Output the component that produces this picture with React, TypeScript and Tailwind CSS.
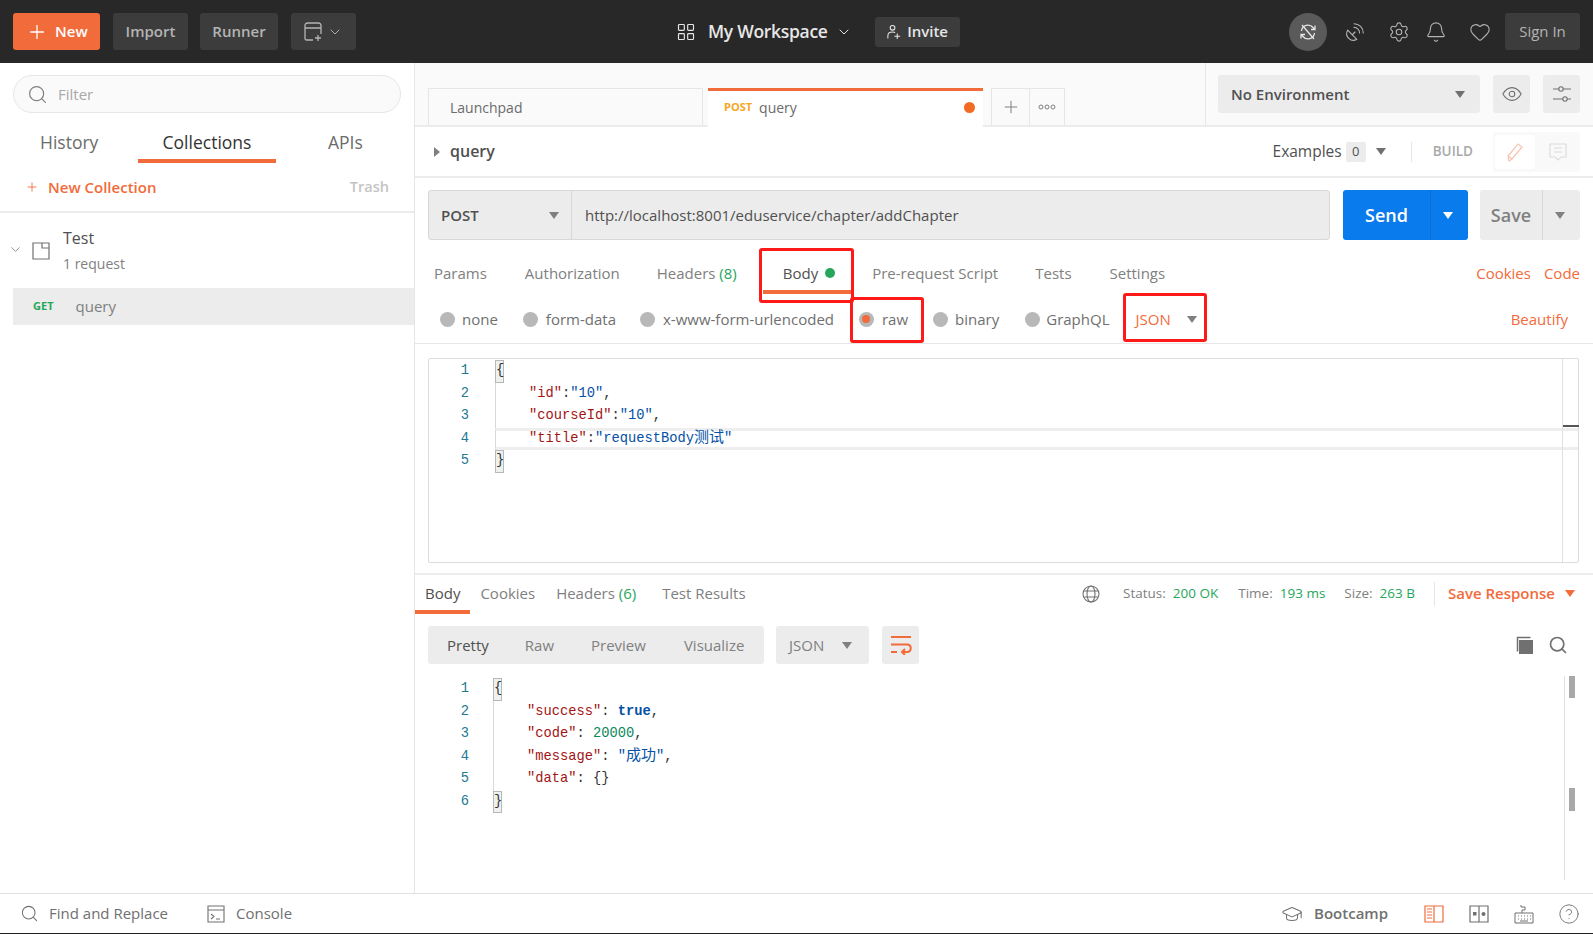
import {
  Bell,
  ChevronDown,
  CircleHelp,
  GraduationCap,
  Heart,
  LayoutGrid,
  Plus,
  SatelliteDish,
  Search,
  Settings,
} from "lucide-react";

const ORANGE = "text-[#f26b3a]";

function Caret({ className = "text-[#808080]" }: { className?: string }) {
  return (
    <svg viewBox="0 0 10 7" className={`h-[7px] w-[10px] shrink-0 ${className}`}>
      <path d="M0 0h10L5 7z" fill="currentColor" />
    </svg>
  );
}

function Radio({ on = false }: { on?: boolean }) {
  return (
    <span className="flex h-[15px] w-[15px] shrink-0 items-center justify-center rounded-full bg-[#b8b8b8]">
      {on && <span className="h-[8px] w-[8px] rounded-full bg-[#f26b3a]" />}
    </span>
  );
}

function HeaderButton({ label, width }: { label: string; width: string }) {
  return (
    <button className={`flex h-[37px] items-center justify-center rounded-[3px] bg-[#3c3c3c] text-[15px] font-semibold text-[#b4b4b4] ${width}`}>
      {label}
    </button>
  );
}

function TopBar() {
  return (
    <header className="flex h-[63px] shrink-0 items-center bg-[#282828] pl-[13px] pr-[13px]">
      <button className="flex h-[37px] w-[87px] items-center rounded-[3px] bg-[#f26b3a] pl-[13px] text-[15px] font-semibold text-white">
        <Plus size={22} strokeWidth={1.4} className="mr-[7px]" />
        New
      </button>
      <div className="ml-[13px] flex gap-[12px]">
        <HeaderButton label="Import" width="w-[75px]" />
        <HeaderButton label="Runner" width="w-[78px]" />
      </div>
      <button className="ml-[13px] flex h-[37px] w-[65px] items-center rounded-[3px] bg-[#3c3c3c] pl-[13px] text-[#b4b4b4]">
        <svg viewBox="0 0 20 20" className="h-[20px] w-[20px]" fill="none" stroke="currentColor" strokeWidth="1.3">
          <path d="M9 18H2.500A1.500 1.500 0 0 1 1 16.500v-13A2.500 2.500 0 0 1 3.500 1h11A2.500 2.500 0 0 1 17 3.500V12M1 6h16M14 13v6M11 16h6" />
        </svg>
        <ChevronDown size={16} strokeWidth={1.4} className="ml-[3px]" />
      </button>
      <div className="ml-[320px] flex items-center text-[#e6e6e6]">
        <LayoutGrid size={20} strokeWidth={1.4} />
        <span className="ml-[12px] text-[17.5px] font-semibold tracking-[-0.3px]">My Workspace</span>
        <ChevronDown size={16} strokeWidth={1.5} className="ml-[8px]" />
      </div>
      <button className="ml-[23px] flex h-[30px] w-[85px] items-center justify-center rounded-[3px] bg-[#3c3c3c] text-[15px] font-semibold text-[#e6e6e6]">
        <svg viewBox="0 0 16 18" className="mr-[6px] h-[18px] w-[15px]" fill="none" stroke="currentColor" strokeWidth="1.1">
          <circle cx="7" cy="4.500" r="2.500" />
          <path d="M2 16v-3c0-2.500 2-4 5-4 1 0 2 .2 2.800.6M12 10.500v6M9 13.500h6" />
        </svg>
        Invite
      </button>
      <div className="ml-auto flex items-center text-[#b4b4b4]">
        <span className="flex h-[38px] w-[38px] items-center justify-center rounded-full bg-[#5a5a5a] text-[#e6e6e6]">
          <svg viewBox="0 0 20 20" className="h-[20px] w-[20px]" fill="none" stroke="currentColor" strokeWidth="1.3">
            <path d="M3.500 9a6.500 6.500 0 0 1 11.500-3.500l2 2M16.500 11a6.500 6.500 0 0 1-11.500 3.500l-2-2M17 3.500v4h-4M3 16.500v-4h4M4 3l12 14" />
          </svg>
        </span>
        <SatelliteDish size={22} strokeWidth={1.2} className="ml-[17px]" />
        <Settings size={22} strokeWidth={1.2} className="ml-[22px]" />
        <Bell size={22} strokeWidth={1.2} className="ml-[15px]" />
        <Heart size={22} strokeWidth={1.2} className="ml-[22px]" />
        <button className="ml-[14px] flex h-[37px] w-[75px] items-center justify-center rounded-[3px] bg-[#3c3c3c] text-[15px] text-[#b4b4b4]">
          Sign In
        </button>
      </div>
    </header>
  );
}

function Sidebar() {
  return (
    <aside className="flex w-[415px] shrink-0 flex-col border-r border-[#e6e6e6] bg-white">
      <div className="px-[13px] pt-[12px]">
        <div className="flex h-[38px] w-[388px] items-center rounded-[19px] border border-[#e6e6e6] bg-[#fafafa] pl-[13px] text-[15px] text-[#a8a8a8]">
          <Search size={21} strokeWidth={1.4} className="text-[#808080]" />
          <span className="ml-[10px]">Filter</span>
        </div>
      </div>
      <div className="mt-[11px] flex h-[39px] pt-[5px] text-[17.5px] text-[#6b6b6b]">
        <span className="ml-[40px] w-[98px]">History</span>
        <span className="flex h-[34px] w-[138px] justify-center border-b-4 border-[#f26b3a] text-[#333333]">Collections</span>
        <span className="ml-[52px]">APIs</span>
      </div>
      <div className="flex h-[50px] items-center border-b-2 border-[#ececec] text-[15px]">
        <Plus size={14} strokeWidth={1.5} className={`ml-[25px] ${ORANGE}`} />
        <span className={`ml-[9px] font-semibold ${ORANGE}`}>New Collection</span>
        <span className="ml-auto mr-[25px] text-[14.500px] font-semibold text-[#c4c4c4]">Trash</span>
      </div>
      <div className="flex h-[75px] items-center">
        <ChevronDown size={15} strokeWidth={1.2} className="mb-[2px] ml-[8px] text-[#707070]" />
        <svg viewBox="0 0 18 20" className="mb-[2px] ml-[9px] h-[20px] w-[18px] text-[#707070]" fill="none" stroke="currentColor" strokeWidth="1.2">
          <path d="M1 3h16v16H1zM10 3v5h7" />
        </svg>
        <div className="ml-[13px] mt-[1px]">
          <div className="text-[16px] leading-[26px] text-[#505050]">Test</div>
          <div className="text-[14px] leading-[26px] text-[#808080]">1 request</div>
        </div>
      </div>
      <div className="ml-[13px] flex h-[37px] items-center bg-[#ececec]">
        <span className="ml-[20px] text-[11px] font-bold text-[#26a65b]">GET</span>
        <span className="ml-[22px] text-[15px] text-[#808080]">query</span>
      </div>
    </aside>
  );
}

function TabBar() {
  return (
    <div className="flex h-[64px] shrink-0 border-b-2 border-[#ececec] bg-[#fafafa]">
      <div className="flex w-[790px] items-end pl-[13px]">
        <div className="flex h-[37px] w-[275px] items-center border border-b-0 border-[#e6e6e6] pl-[21px] text-[14px] text-[#6b6b6b]">
          Launchpad
        </div>
        <div className="mb-[-2px] ml-[5px] flex h-[39px] w-[275px] items-center border-t-[3px] border-[#f26b3a] bg-white pb-[3px] pl-[16px]">
          <span className="text-[11px] font-bold text-[#f5a623]">POST</span>
          <span className="ml-[7px] text-[14px] text-[#6b6b6b]">query</span>
          <span className="ml-auto mr-[8px] h-[11px] w-[11px] rounded-full bg-[#f26b22]" />
        </div>
        <div className="ml-[8px] flex h-[37px] w-[74px] items-center border border-b-0 border-[#e6e6e6] text-[#808080]">
          <span className="flex h-full w-[38px] items-center justify-center border-r border-[#e6e6e6]">
            <Plus size={20} strokeWidth={1.2} />
          </span>
          <span className="flex flex-1 items-center justify-center">
            <svg viewBox="0 0 18 6" className="h-[6px] w-[18px]" fill="none" stroke="currentColor" strokeWidth="1">
              <circle cx="3" cy="3" r="2" />
              <circle cx="9" cy="3" r="2" />
              <circle cx="15" cy="3" r="2" />
            </svg>
          </span>
        </div>
      </div>
      <div className="flex flex-1 items-start border-l border-[#e6e6e6] pl-[12px] pt-[12px]">
        <div className="flex h-[38px] w-[262px] items-center rounded-[3px] bg-[#ececec] pl-[13px] pr-[15px] text-[15px] font-semibold text-[#505050]">
          No Environment
          <Caret className="ml-auto text-[#707070]" />
        </div>
        <span className="ml-[13px] flex h-[38px] w-[37px] items-center justify-center rounded-[3px] bg-[#ececec] text-[#707070]">
          <svg viewBox="0 0 22 16" className="h-[16px] w-[20px]" fill="none" stroke="currentColor" strokeWidth="1.2">
            <path d="M1 8c2.500-4.500 6-7 10-7s7.500 2.500 10 7c-2.500 4.500-6 7-10 7S3.500 12.500 1 8z" />
            <circle cx="11" cy="8" r="3" />
          </svg>
        </span>
        <span className="ml-[13px] flex h-[38px] w-[37px] items-center justify-center rounded-[3px] bg-[#ececec] text-[#707070]">
          <svg viewBox="0 0 20 18" className="h-[18px] w-[20px]" fill="none" stroke="currentColor" strokeWidth="1.1">
            <path d="M1 4h6M11 4h8M1 14h10M15 14h4" />
            <circle cx="9" cy="4" r="2.200" />
            <circle cx="13" cy="14" r="2.200" />
          </svg>
        </span>
      </div>
    </div>
  );
}

function QueryRow() {
  return (
    <div className="flex h-[51px] shrink-0 items-center border-b-2 border-[#ececec] pl-[19px]">
      <svg viewBox="0 0 6 10" className="h-[10px] w-[6px] text-[#808080]">
        <path d="M0 0l6 5-6 5z" fill="currentColor" />
      </svg>
      <span className="mb-[2px] ml-[10px] text-[16px] font-semibold text-[#505050]">query</span>
      <span className="ml-auto text-[15.5px] text-[#505050]">Examples</span>
      <span className="ml-[4px] flex h-[20px] w-[20px] items-center justify-center rounded-[2px] bg-[#ececec] text-[13px] text-[#505050]">0</span>
      <Caret className="ml-[10px] text-[#707070]" />
      <span className="ml-[25px] h-[20px] w-px bg-[#e6e6e6]" />
      <span className="ml-[21px] text-[13.5px] font-semibold text-[#a8a8a8]">BUILD</span>
      <div className="ml-[20px] mr-[13px] flex h-[40px] w-[87px] items-center rounded-[3px] bg-[#f9f9f9] pl-[2px]">
        <span className="flex h-[34px] w-[40px] items-center justify-center rounded-[3px] bg-white text-[#f8c4b0]">
          <svg viewBox="0 0 18 20" className="h-[20px] w-[18px]" fill="none" stroke="currentColor" strokeWidth="1.2">
            <path d="M3 19l-1-5L12 2l4 3L6 17zM2 14l4 3" />
          </svg>
        </span>
        <span className="flex flex-1 items-center justify-center text-[#dcdcdc]">
          <svg viewBox="0 0 18 20" className="h-[20px] w-[18px]" fill="none" stroke="currentColor" strokeWidth="1.2">
            <path d="M1 2h16v13h-5l-3 3-3-3H1zM5 6h8M5 10h8" />
          </svg>
        </span>
      </div>
    </div>
  );
}

function UrlRow() {
  return (
    <div className="flex h-[50px] shrink-0 pl-[13px] pr-[13px]">
      <div className="flex w-[902px] rounded-[3px] border border-[#d8d8d8] bg-[#ececec] text-[#505050]">
        <div className="flex w-[143px] items-center border-r border-[#d8d8d8] pl-[12px] pr-[12px] text-[15px] font-semibold">
          POST
          <Caret className="ml-auto text-[#808080]" />
        </div>
        <div className="flex flex-1 items-center pl-[13px] text-[15px]">http://localhost:8001/eduservice/chapter/addChapter</div>
      </div>
      <div className="ml-[13px] flex w-[125px] rounded-[3px] bg-[#097bed] text-white">
        <span className="flex flex-1 items-center justify-center text-[18px] font-semibold">Send</span>
        <span className="flex w-[38px] items-center justify-center border-l border-[#0a6fd4] pr-[3px]">
          <Caret className="text-white" />
        </span>
      </div>
      <div className="ml-[12px] flex w-[100px] rounded-[3px] bg-[#ececec] text-[#808080]">
        <span className="flex flex-1 items-center justify-center text-[18px] font-semibold">Save</span>
        <span className="flex w-[38px] items-center justify-center border-l border-[#d8d8d8] pr-[3px]">
          <Caret className="text-[#808080]" />
        </span>
      </div>
    </div>
  );
}

function RequestTabs() {
  return (
    <div className="flex h-[54px] shrink-0 items-center pl-[19px] pr-[13px] pt-[12px] text-[15px] text-[#808080]">
      <span>Params</span>
      <span className="ml-[38px]">Authorization</span>
      <span className="ml-[37px]">
        Headers <span className="text-[#26a65b]">(8)</span>
      </span>
      <span className="relative ml-[46px] flex h-[42px] items-center text-[#505050]">
        Body
        <span className="ml-[7px] h-[10px] w-[10px] rounded-full bg-[#26a65b]" />
        <span className="absolute bottom-0 left-[-20px] right-[-16px] h-[4px] bg-[#f26b3a]" />
      </span>
      <span className="ml-[37px]">Pre-request Script</span>
      <span className="ml-[37px]">Tests</span>
      <span className="ml-[38px]">Settings</span>
      <span className={`ml-auto ${ORANGE}`}>Cookies</span>
      <span className={`ml-[13px] ${ORANGE}`}>Code</span>
    </div>
  );
}

function BodyTypes() {
  return (
    <div className="flex h-[50px] shrink-0 items-center border-b border-[#e6e6e6] pl-[25px] pr-[25px] pt-[1px] text-[15px] text-[#707070]">
      <Radio />
      <span className="ml-[7px]">none</span>
      <span className="ml-[25px]"><Radio /></span>
      <span className="ml-[8px]">form-data</span>
      <span className="ml-[24px]"><Radio /></span>
      <span className="ml-[8px]">x-www-form-urlencoded</span>
      <span className="ml-[25px]"><Radio on /></span>
      <span className="ml-[8px]">raw</span>
      <span className="ml-[25px]"><Radio /></span>
      <span className="ml-[7px]">binary</span>
      <span className="ml-[26px]"><Radio /></span>
      <span className="ml-[6px]">GraphQL</span>
      <span className={`ml-[26px] ${ORANGE}`}>JSON</span>
      <Caret className="ml-[16px] text-[#808080]" />
      <span className={`ml-auto ${ORANGE}`}>Beautify</span>
    </div>
  );
}

type Token = { text: string; color: string; bold?: boolean };

const KEY = "text-[#a31515]";
const STR = "text-[#0451a5]";
const PUN = "text-[#333333]";
const CJK = "text-[#0451a5] text-[15px]";

const requestLines: Token[][] = [
  [{ text: "{", color: PUN }],
  [
    { text: '    "id"', color: KEY },
    { text: ":", color: PUN },
    { text: '"10"', color: STR },
    { text: ",", color: PUN },
  ],
  [
    { text: '    "courseId"', color: KEY },
    { text: ":", color: PUN },
    { text: '"10"', color: STR },
    { text: ",", color: PUN },
  ],
  [
    { text: '    "title"', color: KEY },
    { text: ":", color: PUN },
    { text: '"requestBody', color: STR },
    { text: "测试", color: CJK },
    { text: '"', color: STR },
  ],
  [{ text: "}", color: PUN }],
];

const responseLines: Token[][] = [
  [{ text: "{", color: PUN }],
  [
    { text: '    "success"', color: KEY },
    { text: ": ", color: PUN },
    { text: "true", color: "text-[#0451a5]", bold: true },
    { text: ",", color: PUN },
  ],
  [
    { text: '    "code"', color: KEY },
    { text: ": ", color: PUN },
    { text: "20000", color: "text-[#09885a]" },
    { text: ",", color: PUN },
  ],
  [
    { text: '    "message"', color: KEY },
    { text: ": ", color: PUN },
    { text: '"', color: STR },
    { text: "成功", color: CJK },
    { text: '"', color: STR },
    { text: ",", color: PUN },
  ],
  [
    { text: '    "data"', color: KEY },
    { text: ": ", color: PUN },
    { text: "{}", color: PUN },
  ],
  [{ text: "}", color: PUN }],
];

function Code({
  lines,
  activeLine,
  numberPad = "pr-[26px]",
}: {
  lines: Token[][];
  activeLine?: number;
  numberPad?: string;
}) {
  const last = lines.length - 1;
  return (
    <div className="font-['Liberation_Mono','Noto_Sans_CJK_SC',monospace] text-[13.75px] leading-[22.5px]">
      {lines.map((line, i) => (
        <div key={i} className="flex h-[22.5px]">
          <span className={`w-[66px] shrink-0 text-right text-[#237893] ${numberPad}`}>{i + 1}</span>
          <div className={`relative flex-1 whitespace-pre border-l border-[#d8d8d8] ${i === activeLine ? "border-y-[3px] border-y-[#eeeeee] leading-[16.5px]" : ""}`}>
            {(i === 0 || i === last) && (
              <span className="absolute left-[-1px] top-0 h-[22.5px] w-[9px] border border-[#b8b8b8] bg-[#eef2ee]" />
            )}
            <span className="relative">
              {line.map((t, j) => (
                <span key={j} className={`${t.color} ${t.bold ? "font-bold" : ""}`}>
                  {t.text}
                </span>
              ))}
            </span>
          </div>
        </div>
      ))}
    </div>
  );
}

function RequestEditor() {
  return (
    <div className="shrink-0 pl-[13px] pr-[14px] pt-[14px]">
      <div className="relative h-[205px] rounded-[2px] border border-[#dcdcdc] pt-[1px]">
        <Code lines={requestLines} activeLine={3} />
        <div className="absolute bottom-0 right-0 top-0 w-[16px] border-l border-[#e0e0e0]">
          <span className="absolute left-0 top-[66px] h-[2px] w-[16px] bg-[#555555]" />
        </div>
      </div>
    </div>
  );
}

function ResponseTabs() {
  return (
    <div className="mt-[10px] flex h-[41px] shrink-0 items-center border-t-2 border-[#ececec] pb-[2px] pr-[18px] text-[15px] text-[#808080]">
      <span className="relative ml-[10px] flex h-[37px] items-center text-[#505050]">
        Body
        <span className="absolute bottom-[-2px] left-[-10px] right-[-10px] h-[4px] bg-[#f26b3a]" />
      </span>
      <span className="ml-[20px]">Cookies</span>
      <span className="ml-[21px]">
        Headers <span className="text-[#26a65b]">(6)</span>
      </span>
      <span className="ml-[26px]">Test Results</span>
      <svg viewBox="0 0 18 18" className="ml-auto h-[18px] w-[18px] text-[#707070]" fill="none" stroke="currentColor" strokeWidth="1.1">
        <circle cx="9" cy="9" r="8" />
        <ellipse cx="9" cy="9" rx="4" ry="8" />
        <path d="M2 6h14M2 12h14" />
      </svg>
      <span className="ml-[23px] text-[13.5px] text-[#808080]">Status:</span>
      <span className="ml-[7px] text-[13.5px] text-[#26a65b]">200 OK</span>
      <span className="ml-[20px] text-[13.5px] text-[#808080]">Time:</span>
      <span className="ml-[7px] text-[13.5px] text-[#26a65b]">193 ms</span>
      <span className="ml-[19px] text-[13.5px] text-[#808080]">Size:</span>
      <span className="ml-[7px] text-[13.5px] text-[#26a65b]">263 B</span>
      <span className="ml-[19px] h-[24px] w-px bg-[#e6e6e6]" />
      <span className={`ml-[13px] font-semibold ${ORANGE}`}>Save Response</span>
      <Caret className={`ml-[10px] ${ORANGE}`} />
    </div>
  );
}

function ResponseToolbar() {
  return (
    <div className="mt-[12px] flex h-[38px] shrink-0 items-center pl-[13px] pr-[25px] text-[15px] text-[#808080]">
      <div className="flex h-full w-[336px] items-center rounded-[3px] bg-[#ececec]">
        <span className="ml-[19px] text-[#505050]">Pretty</span>
        <span className="ml-[36px]">Raw</span>
        <span className="ml-[37px]">Preview</span>
        <span className="ml-[38px]">Visualize</span>
      </div>
      <div className="ml-[12px] flex h-full w-[93px] items-center rounded-[3px] bg-[#ececec] pl-[13px]">
        JSON
        <Caret className="ml-[18px] text-[#808080]" />
      </div>
      <span className="ml-[13px] flex h-full w-[37px] items-center justify-center rounded-[3px] bg-[#ececec] text-[#f26b3a]">
        <svg viewBox="0 0 22 20" className="h-[20px] w-[22px]" fill="none" stroke="currentColor" strokeWidth="2">
          <path d="M1 2h20M1 9.500h16c5 0 5 7.500 0 7.500h-5M15 14l-3 3 3 3M1 17h6" />
        </svg>
      </span>
      <svg viewBox="0 0 18 18" className="ml-auto h-[18px] w-[18px] text-[#707070]">
        <path d="M4 4h14v14H4z" fill="currentColor" />
        <path d="M2.500 15.500V1.500h13" fill="none" stroke="currentColor" strokeWidth="1.500" />
      </svg>
      <Search size={20} strokeWidth={2} className="ml-[15px] text-[#707070]" />
    </div>
  );
}

function ResponseBody() {
  return (
    <div className="mt-[12px] flex min-h-0 flex-1 pb-[13px] pr-[14px]">
      <div className="flex-1 pl-[12px] pt-[2px]">
        <Code lines={responseLines} numberPad="pr-[24px]" />
      </div>
      <div className="relative w-[15px] shrink-0 border-l border-[#e0e0e0]">
        <span className="absolute left-[4px] top-0 h-[22px] w-[6px] bg-[#a8a8a8]" />
        <span className="absolute left-[4px] top-[112px] h-[23px] w-[6px] bg-[#a8a8a8]" />
      </div>
    </div>
  );
}

function Footer() {
  return (
    <footer className="flex h-[41px] shrink-0 items-center border-t border-b border-t-[#e0e0e0] border-b-[#222222] bg-white pl-[20px] pr-[13px] text-[15px] text-[#707070]">
      <Search size={19} strokeWidth={1.3} className="text-[#707070]" />
      <span className="ml-[10px]">Find and Replace</span>
      <svg viewBox="0 0 18 18" className="ml-[39px] h-[18px] w-[18px]" fill="none" stroke="currentColor" strokeWidth="1.1">
        <path d="M1 1h16v16H1zM1 5h16M4 9l3 2.500L4 14M9 14h4" />
      </svg>
      <span className="ml-[11px]">Console</span>
      <GraduationCap size={22} strokeWidth={1.1} className="ml-auto" />
      <span className="ml-[11px] font-semibold">Bootcamp</span>
      <svg viewBox="0 0 20 18" className={`ml-[36px] h-[18px] w-[20px] ${ORANGE}`} fill="none" stroke="currentColor" strokeWidth="1.2">
        <path d="M1 1h18v16H1zM10 1v16M3 4h5M3 7h5M3 10h5M3 13h5" />
      </svg>
      <svg viewBox="0 0 20 18" className="ml-[25px] h-[18px] w-[20px]" fill="none" stroke="currentColor" strokeWidth="1.2">
        <path d="M1 1h18v16H1zM10 1v16" />
        <rect x="4" y="7" width="3.500" height="3.500" fill="currentColor" stroke="none" />
        <circle cx="14.500" cy="9" r="2" fill="currentColor" stroke="none" />
      </svg>
      <svg viewBox="0 0 20 20" className="ml-[25px] h-[20px] w-[20px]" fill="none" stroke="currentColor" strokeWidth="1">
        <path d="M1 9h18v10H1zM4 12h1M7 12h1M10 12h1M13 12h1M16 12h1M4 15h1M7 15h1M10 15h1M13 15h1M16 15h1M6 17h8M8 9V6h3V3H7V1" />
      </svg>
      <CircleHelp size={22} strokeWidth={1} className="ml-[24px]" />
    </footer>
  );
}

function Annotation({ className }: { className: string }) {
  return <div className={`pointer-events-none absolute rounded-[3px] border-[3px] border-[#ff1a1a] ${className}`} />;
}

export default function App() {
  return (
    <div className="relative flex h-[934px] w-[1593px] flex-col overflow-hidden bg-white font-['Open_Sans',sans-serif]">
      <TopBar />
      <div className="flex min-h-0 flex-1">
        <Sidebar />
        <main className="flex min-w-0 flex-1 flex-col">
          <TabBar />
          <QueryRow />
          <div className="h-[12px] shrink-0" />
          <UrlRow />
          <RequestTabs />
          <BodyTypes />
          <RequestEditor />
          <ResponseTabs />
          <ResponseToolbar />
          <ResponseBody />
        </main>
      </div>
      <Footer />
      <Annotation className="left-[759px] top-[248px] h-[55px] w-[95px]" />
      <Annotation className="left-[850px] top-[297px] h-[46px] w-[74px]" />
      <Annotation className="left-[1123px] top-[293px] h-[49px] w-[84px]" />
    </div>
  );
}
